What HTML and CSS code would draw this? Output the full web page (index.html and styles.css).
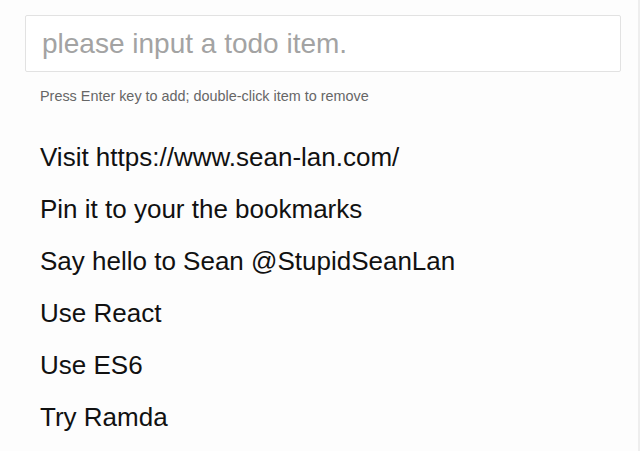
FILE: index.html
```html
<!DOCTYPE html>
<html>
<head>
<meta charset="utf-8">
<link rel="stylesheet" href="styles.css">
</head>
<body>
<div class="app">
  <input class="todo-input" type="text" placeholder="please input a todo item.">
  <p class="hint">Press Enter key to add; double-click item to remove</p>
  <ul class="todo-list">
    <li>Visit https://www.sean-lan.com/</li>
    <li>Pin it to your the bookmarks</li>
    <li>Say hello to Sean @StupidSeanLan</li>
    <li>Use React</li>
    <li>Use ES6</li>
    <li>Try Ramda</li>
  </ul>
</div>
</body>
</html>
```
FILE: styles.css
```css
html, body {
  margin: 0;
  padding: 0;
  background: #fdfdfd;
  height: 100%;
}
body {
  font-family: "Liberation Sans", Arial, sans-serif;
  color: #111;
  border-right: 2px solid #eeeeee;
  box-sizing: border-box;
}
.app {
  padding: 15px 18px 0 25px;
}
.todo-input {
  display: block;
  box-sizing: border-box;
  width: 596px;
  height: 57px;
  margin: 0;
  border: 1px solid #e2e2e2;
  border-radius: 2px;
  padding: 0 16px;
  font-family: "Liberation Sans", Arial, sans-serif;
  font-size: 28px;
  color: #333;
  background: #fff;
  outline: none;
}
.todo-input::placeholder {
  color: #a3a3a3;
}
.hint {
  margin: 16px 0 0 15px;
  font-size: 14.4px;
  color: #666;
  line-height: 16px;
}
.todo-list {
  list-style: none;
  margin: 27px 0 0 0;
  padding: 0 0 0 15px;
}
.todo-list li {
  font-size: 26px;
  line-height: 52px;
  color: #111;
}
```
